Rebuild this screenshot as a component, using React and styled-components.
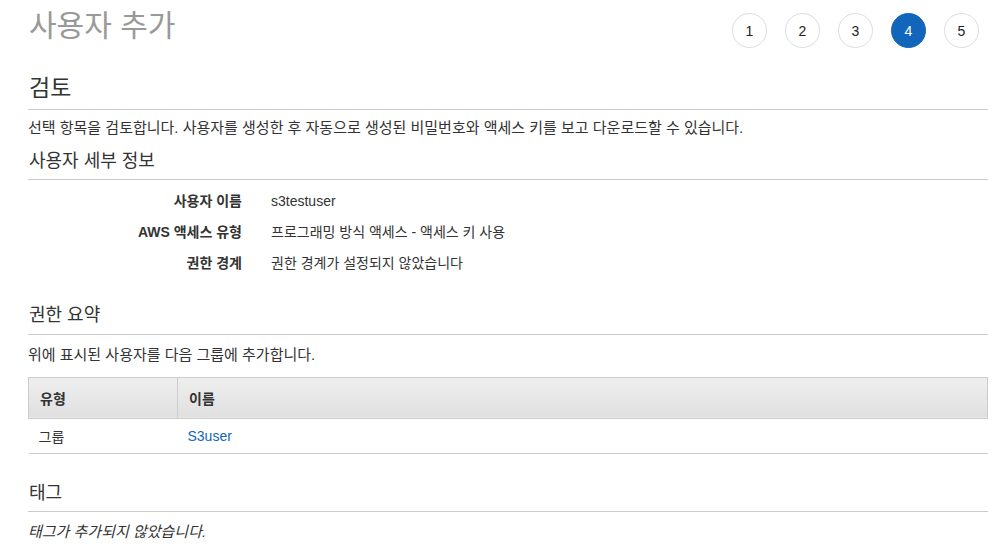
import React from "react";
import styled, { createGlobalStyle } from "styled-components";

const GlobalStyle = createGlobalStyle`
  body {
    margin: 0;
    background: #fff;
    font-family: "Liberation Sans", Arial, "Noto Sans CJK KR", sans-serif;
    color: #444;
  }
`;

const Page = styled.div`
  padding: 0 14px 0 28px;
`;

const Header = styled.div`
  display: flex;
  justify-content: space-between;
  align-items: flex-start;
  height: 74px;
`;

const Title = styled.h1`
  margin: 1px 0 0 1px;
  font-size: 30px;
  font-weight: normal;
  color: #999;
`;

const Steps = styled.div`
  display: flex;
  gap: 18px;
  margin: 13px 9px 0 0;
`;

const Step = styled.div`
  width: 35px;
  height: 35px;
  box-sizing: border-box;
  border-radius: 50%;
  border: 1px solid ${(p) => (p.active ? "#1166bb" : "#dddddd")};
  background: ${(p) => (p.active ? "#1166bb" : "#fff")};
  color: ${(p) => (p.active ? "#fff" : "#222")};
  display: flex;
  align-items: center;
  justify-content: center;
  font-size: 14px;
`;

const SectionTitle = styled.h2`
  margin: ${(p) => p.mt || 0}px 0 0;
  padding: 0 0 ${(p) => (p.big ? 6 : 7)}px 1px;
  font-size: ${(p) => (p.big ? 23 : 18)}px;
  font-weight: normal;
  color: #333;
  border-bottom: 1px solid #ccc;
  line-height: 1.25;
`;

const Text = styled.p`
  margin: 0;
  padding: ${(p) => p.pt || 8}px 0 0 0;
  font-size: 15px;
  line-height: 20px;
  color: #333;
  font-style: ${(p) => (p.italic ? "italic" : "normal")};
`;

const DetailList = styled.div`
  display: grid;
  grid-template-columns: 214px 1fr;
  column-gap: 29px;
  padding-top: 6px;
`;

const DetailLabel = styled.div`
  text-align: right;
  font-weight: bold;
  font-size: 14px;
  line-height: 31px;
  color: #333;
`;

const DetailValue = styled.div`
  font-size: 14px;
  line-height: 31px;
  color: #333;
`;

const Table = styled.table`
  width: 100%;
  margin-top: 12px;
  border-collapse: collapse;
  font-size: 14px;
`;

const Th = styled.th`
  text-align: left;
  font-weight: bold;
  color: #333;
  height: 40px;
  padding: 0 11px;
  background: linear-gradient(#eeeeee, #e0e0e0);
  border: 1px solid #ccc;
  width: ${(p) => p.w || "auto"};
`;

const Td = styled.td`
  height: 34px;
  padding: 0 10px;
  border-bottom: 1px solid #ccc;
  color: #333;
`;

const Link = styled.a`
  color: #1166bb;
  text-decoration: none;
`;

const details = [
  ["사용자 이름", "s3testuser"],
  ["AWS 액세스 유형", "프로그래밍 방식 액세스 - 액세스 키 사용"],
  ["권한 경계", "권한 경계가 설정되지 않았습니다"],
];

export default function App() {
  return (
    <Page>
      <GlobalStyle />
      <Header>
        <Title>사용자 추가</Title>
        <Steps>
          {[1, 2, 3, 4, 5].map((n) => (
            <Step key={n} active={n === 4}>
              {n}
            </Step>
          ))}
        </Steps>
      </Header>

      <SectionTitle big>검토</SectionTitle>
      <Text>
        선택 항목을 검토합니다. 사용자를 생성한 후 자동으로 생성된 비밀번호와 액세스 키를 보고 다운로드할 수 있습니다.
      </Text>

      <SectionTitle mt={12}>사용자 세부 정보</SectionTitle>
      <DetailList>
        {details.map(([k, v]) => (
          <React.Fragment key={k}>
            <DetailLabel>{k}</DetailLabel>
            <DetailValue>{v}</DetailValue>
          </React.Fragment>
        ))}
      </DetailList>

      <SectionTitle mt={25}>권한 요약</SectionTitle>
      <Text pt={10}>위에 표시된 사용자를 다음 그룹에 추가합니다.</Text>
      <Table>
        <thead>
          <tr>
            <Th w="126px">유형</Th>
            <Th>이름</Th>
          </tr>
        </thead>
        <tbody>
          <tr>
            <Td>그룹</Td>
            <Td>
              <Link>S3user</Link>
            </Td>
          </tr>
        </tbody>
      </Table>

      <SectionTitle mt={28}>태그</SectionTitle>
      <Text italic pt={10}>태그가 추가되지 않았습니다.</Text>
    </Page>
  );
}
